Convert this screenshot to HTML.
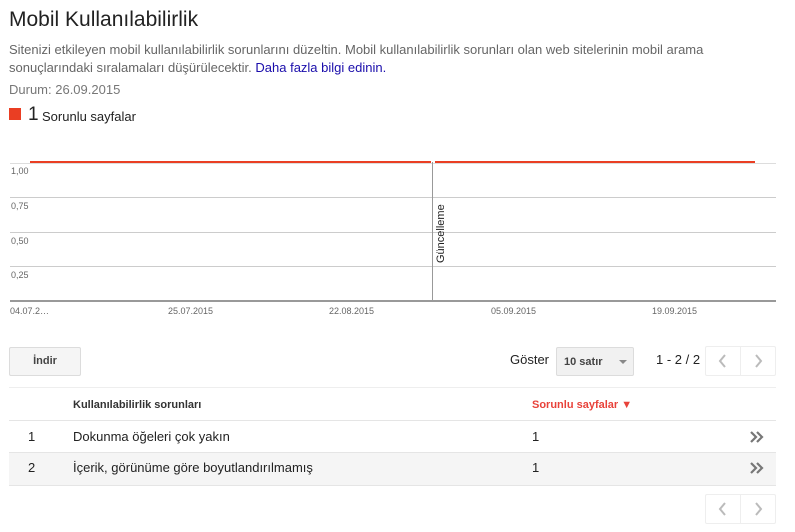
<!DOCTYPE html>
<html><head><meta charset="utf-8"><style>
body{margin:0;width:795px;height:532px;background:#fff;font-family:"Liberation Sans",sans-serif;position:relative;overflow:hidden;color:#222}
.a{position:absolute;white-space:nowrap;line-height:1.15}
.g{position:absolute;left:10px;width:766px;height:1px;background:#ccc}
.yl{position:absolute;left:11px;font-size:9px;color:#666}
.xl{position:absolute;top:306px;font-size:9px;color:#666}
.btn{position:absolute;border:1px solid #dcdcdc;border-radius:2px;background:#f5f5f5}
.pg{position:absolute;width:69px;height:28px;border:1px solid #eee;border-radius:2px}
.pg svg{position:absolute;top:7px}
</style></head><body>
<div class="a" style="left:9px;top:8px;font-size:21px;color:#222">Mobil Kullanılabilirlik</div>
<div class="a" style="left:9px;top:41px;font-size:13px;color:#666;line-height:18px">Sitenizi etkileyen mobil kullanılabilirlik sorunlarını düzeltin. Mobil kullanılabilirlik sorunları olan web sitelerinin mobil arama<br>sonuçlarındaki sıralamaları düşürülecektir. <span style="color:#1a0dab">Daha fazla bilgi edinin.</span></div>
<div class="a" style="left:9px;top:83px;font-size:13px;color:#777">Durum: 26.09.2015</div>
<div class="a" style="left:9px;top:108px;width:12px;height:12px;background:#ea3e23"></div>
<div class="a" style="left:28px;top:104px;font-size:19px;color:#222">1</div>
<div class="a" style="left:42px;top:110px;font-size:13px">Sorunlu sayfalar</div>
<div class="g" style="top:163px;background:#ddd"></div>
<div class="a" style="left:30px;top:161px;width:401px;height:2px;background:#ea3e23"></div>
<div class="a" style="left:435px;top:161px;width:320px;height:2px;background:#ea3e23"></div>
<div class="g" style="top:197px"></div>
<div class="g" style="top:232px"></div>
<div class="g" style="top:266px"></div>
<div class="g" style="top:300px;height:2px;background:#999"></div>
<div class="yl" style="top:166px">1,00</div>
<div class="yl" style="top:201px">0,75</div>
<div class="yl" style="top:236px">0,50</div>
<div class="yl" style="top:270px">0,25</div>
<div class="a" style="left:432px;top:162px;width:1px;height:139px;background:#999"></div>
<div class="a" style="left:435px;top:263px;font-size:11px;transform:rotate(-90deg);transform-origin:0 0;color:#222">Güncelleme</div>
<div class="xl" style="left:10px">04.07.2…</div>
<div class="xl" style="left:168px">25.07.2015</div>
<div class="xl" style="left:329px">22.08.2015</div>
<div class="xl" style="left:491px">05.09.2015</div>
<div class="xl" style="left:652px">19.09.2015</div>
<div class="btn" style="left:9px;top:347px;width:70px;height:27px;text-align:center;line-height:27px;font-size:11px;font-weight:bold;color:#444">İndir</div>
<div class="a" style="left:510px;top:353px;font-size:13px">Göster</div>
<div class="btn" style="left:556px;top:347px;width:76px;height:27px;background:#f1f1f1"><span class="a" style="left:7px;top:8px;font-size:11px;font-weight:bold;color:#444">10 satır</span><span class="a" style="left:62px;top:12px;width:0;height:0;border-left:4px solid transparent;border-right:4px solid transparent;border-top:4px solid #888"></span></div>
<div class="a" style="left:656px;top:353px;font-size:13px">1 - 2 / 2</div>
<div class="pg" style="left:705px;top:346px"><div style="position:absolute;left:34px;top:0;width:1px;height:28px;background:#eee"></div>
<svg style="left:12px" width="10" height="14"><path d="M7 1L2 7L7 13" fill="none" stroke="#bbb" stroke-width="2"/></svg>
<svg style="left:47px" width="10" height="14"><path d="M3 1L8 7L3 13" fill="none" stroke="#bbb" stroke-width="2"/></svg></div>
<div class="a" style="left:9px;top:387px;width:767px;height:1px;background:#eee"></div>
<div class="a" style="left:73px;top:399px;font-size:11px;font-weight:bold;color:#333">Kullanılabilirlik sorunları</div>
<div class="a" style="left:532px;top:399px;font-size:11px;font-weight:bold;color:#e8423a">Sorunlu sayfalar ▼</div>
<div class="a" style="left:9px;top:420px;width:767px;height:1px;background:#e5e5e5"></div>
<div class="a" style="left:28px;top:430px;font-size:13px">1</div>
<div class="a" style="left:73px;top:430px;font-size:13px">Dokunma öğeleri çok yakın</div>
<div class="a" style="left:532px;top:430px;font-size:13px">1</div>
<svg class="a" style="left:749px;top:431px" width="16" height="12"><path d="M2 1L7 6L2 11M8 1L13 6L8 11" fill="none" stroke="#777" stroke-width="2.2"/></svg>
<div class="a" style="left:9px;top:452px;width:767px;height:32px;background:#f5f5f5;border-top:1px solid #e5e5e5;border-bottom:1px solid #e5e5e5"></div>
<div class="a" style="left:28px;top:461px;font-size:13px">2</div>
<div class="a" style="left:73px;top:461px;font-size:13px">İçerik, görünüme göre boyutlandırılmamış</div>
<div class="a" style="left:532px;top:461px;font-size:13px">1</div>
<svg class="a" style="left:749px;top:462px" width="16" height="12"><path d="M2 1L7 6L2 11M8 1L13 6L8 11" fill="none" stroke="#777" stroke-width="2.2"/></svg>
<div class="pg" style="left:705px;top:494px"><div style="position:absolute;left:34px;top:0;width:1px;height:28px;background:#eee"></div>
<svg style="left:12px" width="10" height="14"><path d="M7 1L2 7L7 13" fill="none" stroke="#bbb" stroke-width="2"/></svg>
<svg style="left:47px" width="10" height="14"><path d="M3 1L8 7L3 13" fill="none" stroke="#bbb" stroke-width="2"/></svg></div>
</body></html>
